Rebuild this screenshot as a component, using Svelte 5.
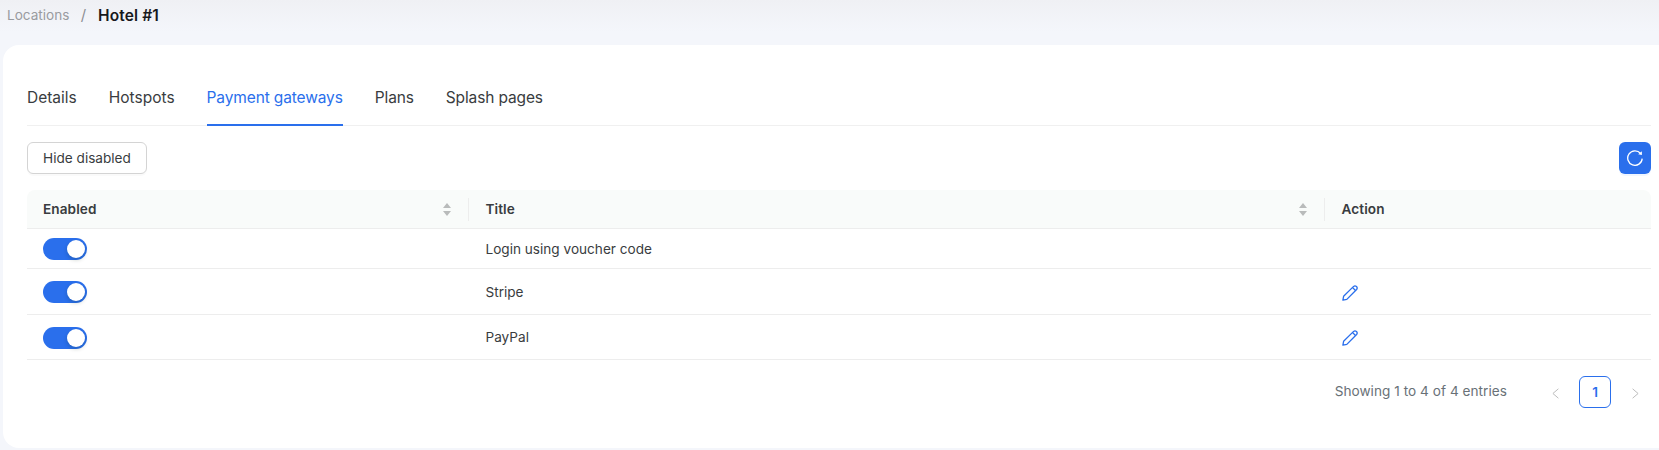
<script>
  const tabs = ['Details', 'Hotspots', 'Payment gateways', 'Plans', 'Splash pages'];
  const active = 'Payment gateways';
  const rows = [
    { title: 'Login using voucher code', editable: false, height: 40 },
    { title: 'Stripe', editable: true, height: 46 },
    { title: 'PayPal', editable: true, height: 45 }
  ];
</script>

{#snippet sorter()}
  <svg class="sorter" width="8" height="13" viewBox="0 0 8 13">
    <path d="M4 0 L8 5 H0 Z M0 8 H8 L4 13 Z" />
  </svg>
{/snippet}

<div class="page">
  <nav class="crumbs">
    <span class="parent">Locations</span>
    <span class="slash">/</span>
    <span class="current">Hotel #1</span>
  </nav>

  <main class="card">
    <div class="tabs">
      {#each tabs as tab}
        <div class="tab" class:active={tab === active} class:tight={tab.length !== 7 && tab.length !== 8}><span>{tab}</span></div>
      {/each}
    </div>

    <div class="toolbar">
      <button class="hide"><span>Hide disabled</span></button>
      <button class="reload" aria-label="Reload">
        <svg width="16" height="16" viewBox="0 0 16 16" fill="none" stroke="#fff" stroke-width="1.3">
          <path d="M15.2 8.6 A7.25 7.25 0 1 1 13.6 3.5" />
          <path d="M14.9 1.2 V4.9 L11.2 4.2 Z" fill="#fff" stroke="none" />
        </svg>
      </button>
    </div>

    <div class="table">
      <div class="row head">
        <div class="cell"><span>Enabled</span>{@render sorter()}</div>
        <div class="cell"><span>Title</span>{@render sorter()}</div>
        <div class="cell"><span>Action</span></div>
      </div>
      {#each rows as row}
        <div class="row" style:height="{row.height}px">
          <div class="cell"><span class="switch"><i></i></span></div>
          <div class="cell"><span>{row.title}</span></div>
          <div class="cell">
            {#if row.editable}
              <svg class="pencil" width="16" height="16" viewBox="0 0 16 16" fill="none" stroke="#2a6fec" stroke-width="1.3" stroke-linejoin="round">
                <path d="M0.9 15.2 L1.6 11.3 L11.6 1.4 Q13 0.3 14.5 1.5 Q15.8 3 14.6 4.5 L4.8 14.4 Z" />
                <path d="M10.5 2.5 L13.5 5.5" />
              </svg>
            {/if}
          </div>
        </div>
      {/each}
    </div>

    <div class="pager">
      <span class="total">Showing 1 to 4 of 4 entries</span>
      <span class="arrow"><svg width="7" height="11" viewBox="0 0 7 11"><path d="M6.4 0.8 L0.9 5.5 L6.4 10.2" /></svg></span>
      <span class="num">1</span>
      <span class="arrow"><svg width="7" height="11" viewBox="0 0 7 11"><path d="M0.6 0.8 L6.1 5.5 L0.6 10.2" /></svg></span>
    </div>
  </main>
</div>

<style>
  :global(body) { background: #f4f6fb; overflow: hidden; }
  .page {
    box-sizing: border-box;
    height: 450px;
    padding-left: 3px;
    overflow: hidden;
    display: flex;
    flex-direction: column;
    font-family: Inter, sans-serif;
    font-size: 13.6px;
    color: #393c40;
    background: linear-gradient(#eff0f4 0, #f4f6fb 32px);
  }
  .crumbs {
    box-sizing: border-box;
    height: 45px;
    padding: 4px 0 0 4px;
    display: flex;
    align-items: flex-start;
    line-height: 22px;
  }
  .parent { width: 62px; color: #999b9f; }
  .slash { width: 29px; text-align: center; color: #8d8f93; font-size: 15px; }
  .current { font-size: 15.5px; line-height: 24px; letter-spacing: .12px; font-weight: 600; color: #17191c; }
  .card {
    box-sizing: border-box;
    height: 403px;
    padding: 33px 8px 0 24px;
    border-radius: 16px 0 0 16px;
    background: #fff;
  }
  .tabs {
    display: flex;
    gap: 32px;
    height: 47px;
    border-bottom: 1px solid #f0f0f0;
    font-size: 15.5px;
  }
  .tab { height: 48px; box-sizing: border-box; line-height: 40px; white-space: nowrap; }
  .tight { letter-spacing: -.13px; }
  .active { color: #2a6fec; border-bottom: 2px solid #2a6fec; }
  .toolbar { display: flex; justify-content: space-between; margin: 16px 0; }
  button { box-sizing: border-box; height: 32px; padding: 0; border-radius: 6px; font: inherit; color: inherit; }
  .hide { width: 120px; background: #fff; border: 1px solid #d4d4d4; box-shadow: 0 2px 0 rgba(0,0,0,.02); }
  .reload { width: 32px; border: 0; background: #2a6fec; box-shadow: 0 2px 0 rgba(5,95,255,.06); display: grid; place-items: center; }
  .row {
    box-sizing: border-box;
    display: grid;
    grid-template-columns: 442px 856px 1fr;
    border-bottom: 1px solid #ededed;
  }
  .cell { display: flex; align-items: center; padding: 0 16px; }
  .cell:nth-child(n+2) { padding-left: 16.5px; }
  .row:last-child .cell:first-child { padding-top: 1px; }
  .head { height: 39px; background: #f9fbfa; border-radius: 8px 8px 0 0; font-weight: 600; letter-spacing: .08px; }
  .head .cell { justify-content: space-between; margin: 8px 0 7px; padding-right: 17px; }
  .head .cell span { margin-top: -2px; }
  .head .cell:not(:last-child) { border-right: 1px solid #ededed; }
  .sorter { fill: #b9bbbb; margin-top: -1px; }
  .pencil { margin-top: 2px; }
  .switch { width: 44px; height: 22px; border-radius: 11px; background: #2a6fec; display: flex; justify-content: flex-end; padding: 2px; box-sizing: border-box; }
  .switch i { width: 18px; height: 18px; border-radius: 50%; background: #fff; box-shadow: 0 2px 4px rgba(0,35,11,.2); }
  .pager { display: flex; justify-content: flex-end; align-items: center; height: 32px; margin-top: 16px; gap: 8px; }
  .total { color: #697177; margin: 0 24px 2px 0; letter-spacing: .04px; }
  .arrow, .num { width: 32px; height: 32px; box-sizing: border-box; display: grid; place-items: center; }
  .arrow svg { margin-top: 2px; }
  .arrow path { fill: none; stroke: #bdbdbd; }
  .num { border: 1px solid #2a6fec; border-radius: 6px; color: #2a6fec; font-weight: 600; }
</style>
